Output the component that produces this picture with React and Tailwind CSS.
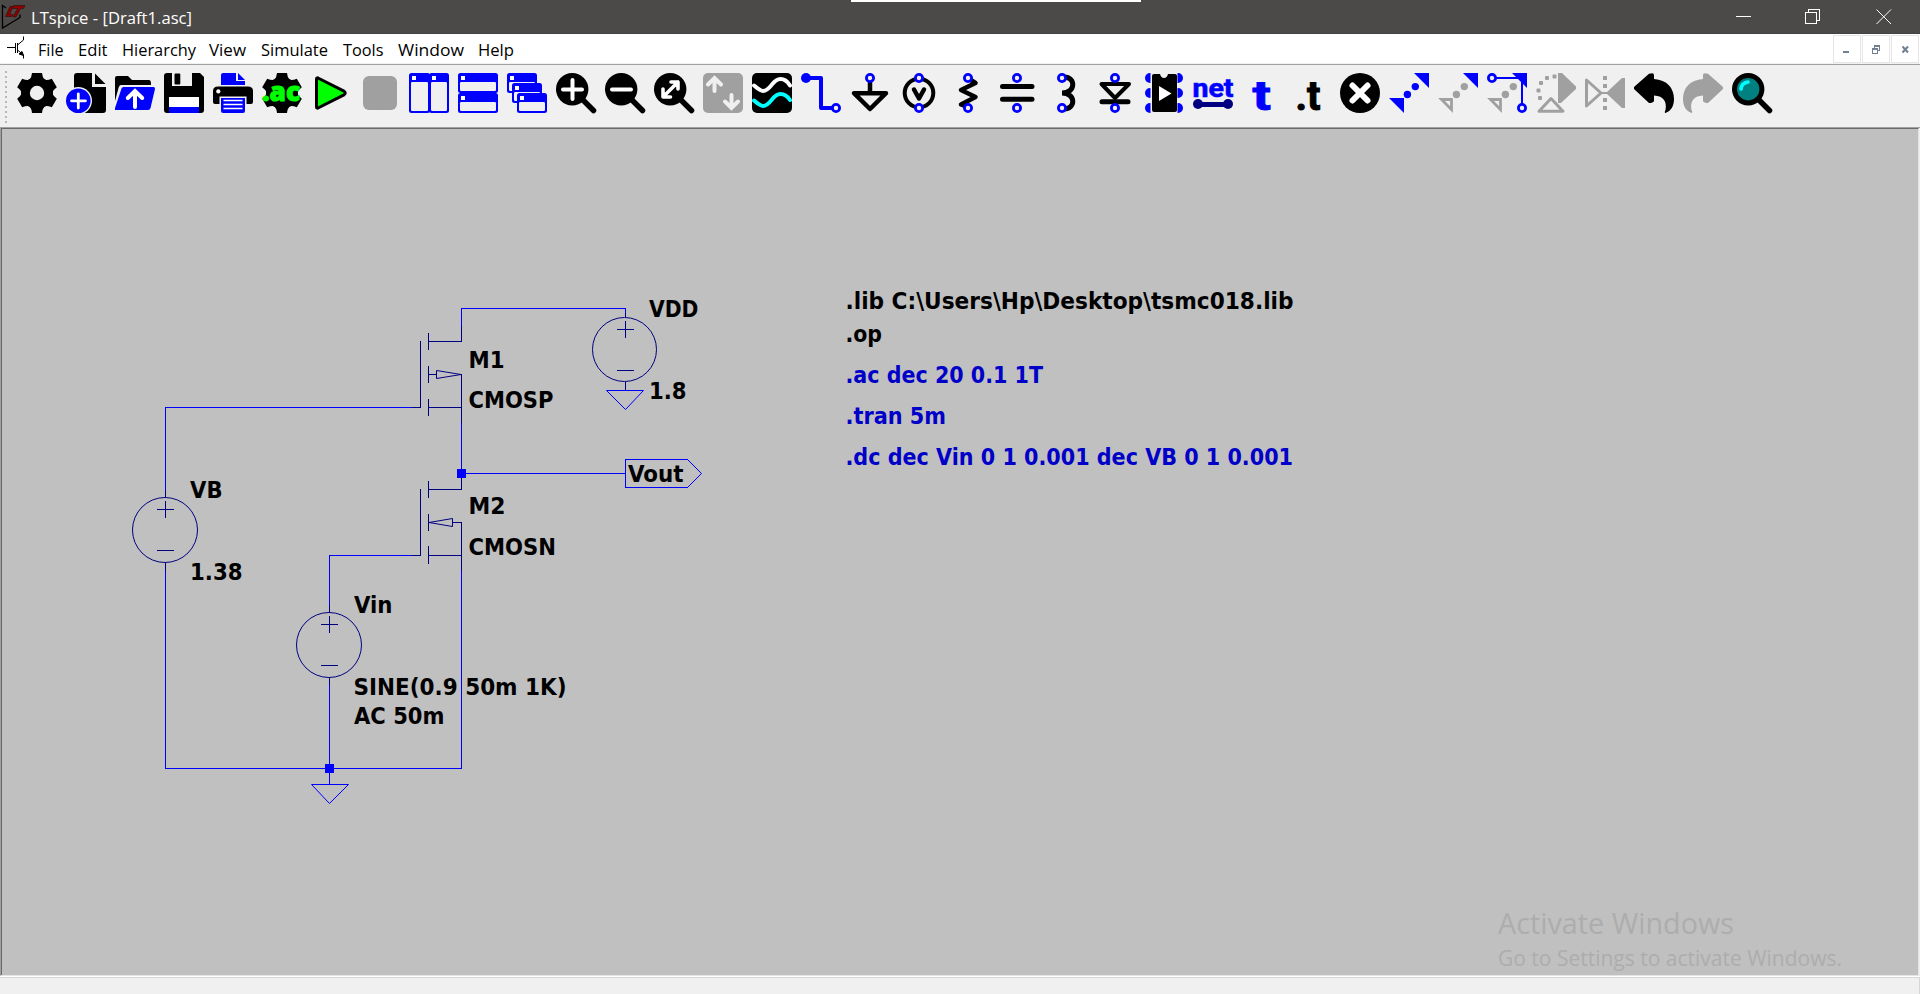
import React from "react";

const BLUE = "#0000ff";
const NAVY = "#000080";
const GRAY = "#a0a0a0";
const FACE = "#f0f0f0";

function Ring({ x, y }) {
  return <circle cx={x} cy={y} r="3.6" fill={FACE} stroke={BLUE} strokeWidth="2.8" />;
}

function Gear({ hole }) {
  return (
    <>
      <circle cx="20" cy="20" r="16" />
      {[0, 60, 120].map((a) => (
        <path key={a} d="M13 6Q14.5 4 15 0H25Q25.500 4 27 6V34Q25.500 36 25 40H15Q14.500 36 13 34Z" transform={`rotate(${a} 20 20)`} />
      ))}
      {hole && <circle cx="20" cy="20" r="7.2" fill={FACE} />}
    </>
  );
}

function Pane({ x, y, w, h }) {
  return (
    <>
      <rect x={x} y={y} width={w} height={h} rx="2.5" fill={BLUE} />
      <rect x={x + 2} y={y + 9} width={w - 4} height={h - 11} rx="1.2" fill={FACE} />
      <rect x={x + 3} y={y + 3} width="4" height="4" fill="#fff" />
    </>
  );
}

function Lens() {
  return (
    <>
      <circle cx="16.200" cy="16.200" r="16.200" />
      <path d="M25 25L37.500 37.500" stroke="#000" strokeWidth="5.500" strokeLinecap="round" />
    </>
  );
}

function Trail({ color, hollow }) {
  return (
    <>
      <circle cx="26.300" cy="13.600" r="3.700" fill={color} />
      <circle cx="18.400" cy="21.500" r="3.700" fill={color} />
      {hollow ? (
        <path d="M3.500 26.500H13.500V36.500Z" fill={FACE} stroke={color} strokeWidth="2.800" />
      ) : (
        <path d="M0 25H15V40Z" fill={color} />
      )}
      <path d="M25 0H40V15Z" fill={BLUE} />
    </>
  );
}

const TURN = "M0 14L15 .8Q20 -1 20 2V6C33 7 40 15 40 26C40 33 37 38 31.500 40Q30 40 31.500 37C33 29 30 23 20 22.500V28Q19 30 15 30L0 16Z";

const tools = [
  ["Settings", <Gear hole />],
  ["New schematic", <>
    <path d="M8 3Q8 0 11 0H26V14H40V37Q40 40 37 40H8Z" />
    <path d="M29 .5L39.500 11H29Z" />
    <circle cx="12.300" cy="27.800" r="13.700" fill={FACE} />
    <circle cx="12.300" cy="27.800" r="12.300" fill={BLUE} />
    <path d="M5.500 27.800H19.500M12.300 20.800V35" stroke="#fff" strokeWidth="2.800" strokeLinecap="round" />
  </>],
  ["Open", <>
    <path d="M0 5Q0 3 2 3H13L17 7H34Q36 7 36 11V12H6Q4 12 3 17L0 28Z" />
    <path d="M6.500 15.500Q7 14 8.500 14H38.500Q40 14 40 16L35.500 35Q35 37 33 37H0V35Z" fill={BLUE} />
    <path d="M20 34V19M12.800 25L20 18L27.200 25" fill="none" stroke="#fff" strokeWidth="4" strokeLinecap="round" />
  </>],
  ["Save", <>
    <path d="M3 0H8V13H28V0H36L40 4V37Q40 40 37 40H3Q0 40 0 37V3Q0 0 3 0Z" />
    <rect x="10.500" y="0.500" width="5.800" height="11" rx="1" />
    <rect x="5" y="24" width="30" height="10" fill="#fff" />
    <rect x="5" y="34" width="30" height="6" fill={BLUE} />
  </>],
  ["Print", <>
    <path d="M8 2Q8 0 10 0H23V8H32V12H8Z" fill={BLUE} />
    <path d="M25 0L32 7H25Z" fill={BLUE} />
    <path d="M5 13.500H35Q40 13.500 40 18V29Q40 31 38 31H2Q0 31 0 29V18Q0 13.500 5 13.500Z" />
    <circle cx="5.300" cy="18.400" r="2.100" fill="#fff" />
    <path d="M6.500 23.500H33.500V40H6.500Z" fill={FACE} />
    <path d="M8 25H32V38Q32 40 30 40H10Q8 40 8 38Z" fill={BLUE} />
    <path d="M10.500 27.500H29.500M10.500 31.500H29.500M10.500 35.500H29.500" stroke="#fff" strokeWidth="1.300" />
  </>],
  ["Run analysis", <>
    <Gear />
    <text x="0" y="27.500" textLength="38" lengthAdjust="spacingAndGlyphs" fontSize="26" fontWeight="900" fill="#00ff00" stroke="#00ff00" strokeWidth="1" className="font-['Open_Sans',sans-serif]">.ac</text>
  </>],
  ["Run", <path d="M5.500 6Q5.500 4 8 5.500L33 18.200Q35.500 20 33 21.800L8 34.500Q5.500 36 5.500 34Z" fill="#00ff00" stroke="#000" strokeWidth="3" strokeLinejoin="round" />],
  ["Stop", <rect x="3" y="3" width="34" height="34" rx="6" fill={GRAY} />],
  ["Tile vertically", <><Pane x={0} y={0} w={21} h={40} /><Pane x={20} y={0} w={20} h={40} /></>],
  ["Tile horizontally", <><Pane x={0} y={0} w={40} h={20} /><Pane x={0} y={20} w={40} h={20} /></>],
  ["Cascade", <><Pane x={0} y={0} w={30} h={20} /><Pane x={5} y={10} w={30} h={20} /><Pane x={10} y={20} w={30} h={20} /></>],
  ["Zoom in", <><Lens /><path d="M7 16.500H26M16.500 7V26" stroke="#fff" strokeWidth="4" strokeLinecap="round" /></>],
  ["Zoom out", <><Lens /><path d="M7 16.500H26" stroke="#fff" strokeWidth="4" strokeLinecap="round" /></>],
  ["Zoom to fit", <><Lens /><path d="M9.500 23.500L24 9M17 9H24V16M9 16V24H16.500" fill="none" stroke="#fff" strokeWidth="3.600" strokeLinecap="round" strokeLinejoin="round" /></>],
  ["Autorange", <>
    <rect width="40" height="40" rx="5" fill={GRAY} />
    <path d="M11.500 18V6M5 11.500L11.500 5L18 11.500M28.500 22V34M22 28.500L28.500 35L35 28.500" fill="none" stroke={FACE} strokeWidth="4" strokeLinecap="round" />
  </>],
  ["Waveform", <>
    <rect width="40" height="40" rx="5" />
    <path d="M2 12.500C6 16 8 18 11 18C19 18 20 6 28.500 6C32 6 35 7.500 38 12.500" fill="none" stroke="#fff" strokeWidth="4" strokeLinecap="round" />
    <path d="M2 27.500C6 31 8 33 11 33C19 33 20 21 28.500 21C32 21 35 22.500 38 27" fill="none" stroke="#00ffff" strokeWidth="4" strokeLinecap="round" />
  </>],
  ["Wire", <>
    <path d="M5 5H20V35H32" fill="none" stroke={BLUE} strokeWidth="4" strokeLinejoin="round" />
    <circle cx="5" cy="5" r="5" fill={BLUE} /><Ring x={35} y={35} />
  </>],
  ["Ground", <>
    <path d="M20 8V19M4 20.200H36L20 36Z" fill={FACE} stroke="#000" strokeWidth="4.500" strokeLinejoin="round" />
    <Ring x={20} y={5} />
  </>],
  ["Voltage source", <>
    <circle cx="20" cy="20" r="14.300" fill={FACE} stroke="#000" strokeWidth="4" />
    <path d="M15 16.500L20 25.500L25 16.500" fill="none" stroke="#000" strokeWidth="4.500" strokeLinecap="round" strokeLinejoin="round" />
    <Ring x={20} y={5} /><Ring x={20} y={35} />
  </>],
  ["Resistor", <>
    <path d="M22 6.500L27.500 10L13 17L27.500 24L13 31.500L18 33.500" fill="none" stroke="#000" strokeWidth="4.500" strokeLinecap="round" strokeLinejoin="round" />
    <Ring x={20} y={5} /><Ring x={20} y={35} />
  </>],
  ["Capacitor", <>
    <path d="M5.500 13.500H35M5.500 26.300H35" stroke="#000" strokeWidth="5" strokeLinecap="round" />
    <Ring x={20} y={5} /><Ring x={20} y={35} />
  </>],
  ["Inductor", <>
    <path d="M18 4C30 4 30 20 16 20C30 20 30 36 18 36" fill="none" stroke="#000" strokeWidth="5" strokeLinecap="round" />
    <Ring x={16} y={5} /><Ring x={16} y={35} />
  </>],
  ["Diode", <>
    <path d="M6.500 11H34L20 25Z" fill={FACE} stroke="#000" strokeWidth="4" strokeLinejoin="round" />
    <path d="M7 28.800H33" stroke="#000" strokeWidth="5" strokeLinecap="round" />
    <Ring x={20} y={5} /><Ring x={20} y={35} />
  </>],
  ["Component", <>
    {[5, 20, 35].map((y) => <g key={y} fill={BLUE}><circle cx="6" cy={y} r="5" /><circle cx="34" cy={y} r="5" /></g>)}
    <rect x="6.500" y="0" width="27" height="40" fill={FACE} />
    <path d="M10 1H16Q17 5 20 5Q23 5 24 1H31Q33 1 33 3V37Q33 39 31 39H10Q8 39 8 37V3Q8 1 10 1Z" />
    <path d="M15 13L27.500 20.500L15 28Z" fill="#fff" />
  </>],
  ["Net label", <>
    <text x="-0.500" y="23.500" textLength="41" lengthAdjust="spacingAndGlyphs" fontSize="25" fontWeight="700" fill={BLUE} stroke={BLUE} strokeWidth="0.600" className="font-[Roboto,sans-serif]">net</text>
    <path d="M5 31.500H35" stroke={NAVY} strokeWidth="5" /><circle cx="5" cy="31" r="5" fill={NAVY} /><circle cx="35" cy="31" r="5" fill={NAVY} />
  </>],
  ["Text", <text x="10.500" y="36.500" textLength="18.500" lengthAdjust="spacingAndGlyphs" fontSize="41" fontWeight="700" fill={BLUE} stroke={BLUE} strokeWidth="0.800" className="font-[Roboto,sans-serif]">t</text>],
  ["Directive", <text x="4.500" y="36.500" textLength="25" lengthAdjust="spacingAndGlyphs" fontSize="41" fontWeight="700" stroke="#000" strokeWidth="1" className="font-[Roboto,sans-serif]">.t</text>],
  ["Delete", <><circle cx="20" cy="20" r="20" /><path d="M12.500 12.500L27.500 27.500M27.500 12.500L12.500 27.500" stroke="#fff" strokeWidth="6" strokeLinecap="round" /></>],
  ["Duplicate", <Trail color={BLUE} />],
  ["Move", <Trail color={GRAY} hollow />],
  ["Drag", <><Trail color={GRAY} hollow /><path d="M7 5H35V33" fill="none" stroke={BLUE} strokeWidth="2" /><Ring x={5} y={5} /><Ring x={35} y={35} /></>],
  ["Rotate", <g fill={GRAY}>
    <path d="M22 0H26L40 13.500V16L25 30H22Z" />
    {[[18.500, 3.500], [11, 5], [5, 10], [2.500, 17.500], [4, 25]].map(([x, y]) => <rect key={x} x={x - 2} y={y - 2} width="4" height="4" rx="1" />)}
    <path d="M3 38.200L15 25.500L27 38.200Z" fill={FACE} stroke={GRAY} strokeWidth="3" strokeLinejoin="round" />
  </g>],
  ["Mirror", <g fill={GRAY}>
    <path d="M1.500 7V33L16 20Z" fill={FACE} stroke={GRAY} strokeWidth="3" strokeLinejoin="round" />
    <path d="M40 5V35H37L22 21V19L37 5ZM15 19H25V21H15Z" />
    {[3, 11, 25, 33].map((y) => <rect key={y} x="18" y={y} width="4" height="4" />)}
  </g>],
  ["Undo", <path d={TURN} />],
  ["Redo", <path d={TURN} fill={GRAY} transform="translate(40 0) scale(-1 1)" />],
  ["Find", <>
    <path d="M27 27L37.500 37.500" stroke="#000" strokeWidth="5.500" strokeLinecap="round" />
    <circle cx="16.200" cy="16.200" r="13.700" fill="#008080" stroke="#000" strokeWidth="5" />
    <path d="M9 16Q9.500 10 16 9" fill="none" stroke="#00ffff" strokeWidth="3.600" strokeLinecap="round" />
  </>],
];

const menus = [
  ["File", "w-[40px]", 25.5], ["Edit", "w-[44px]", 29.5], ["Hierarchy", "w-[87.5px]", 74],
  ["View", "w-[51.500px]", 37], ["Simulate", "w-[82px]", 67], ["Tools", "w-[55px]", 40.5],
  ["Window", "w-[80px]", 66], ["Help", "w-[40px]", 36],
];

// Label text with a fixed advance width
function Fit({ w, size, y = 18, h = 24, children }) {
  return (
    <svg width={w + 2} height={h} className="block overflow-visible font-['Open_Sans',sans-serif]" fill="currentColor">
      <text x="0" y={y} fontSize={size} textLength={w} lengthAdjust="spacingAndGlyphs">{children}</text>
    </svg>
  );
}

const labels = [
  ["VDD", 649, 317, 49.5], ["M1", 468.5, 367.5, 36], ["CMOSP", 468.5, 408, 85], ["1.8", 649, 399, 37.5],
  ["Vout", 628, 482, 55.5], ["M2", 468.5, 514, 37], ["CMOSN", 468.5, 555, 87.5], ["VB", 190, 498, 32.5],
  ["1.38", 190, 580, 52.5], ["Vin", 354, 613, 38.5], ["SINE(0.9 50m 1K)", 353.5, 695, 213], ["AC 50m", 354, 724, 90.5],
  [".lib C:\\Users\\Hp\\Desktop\\tsmc018.lib", 845.5, 309, 448], [".op", 845.5, 341.5, 36.5],
];
const directives = [[".ac dec 20 0.1 1T", 845.5, 383, 197.5], [".tran 5m", 845.5, 424, 100.5], [".dc dec Vin 0 1 0.001 dec VB 0 1 0.001", 845.5, 465, 447.5]];

function Source({ x, y, r = 32.5 }) {
  return (
    <>
      <circle cx={x - 0.5} cy={y} r={r} />
      <path d={`M${x - 8.5} ${y - 20.5}h17M${x} ${y - 29}v17M${x - 8.5} ${y + 20.5}h17`} shapeRendering="crispEdges" />
    </>
  );
}

function Schematic() {
  return (
    <svg viewBox="2 129 1916 846" className="block h-[846px] w-[1916px]">
      <g fill="none" stroke={BLUE} strokeWidth="1">
        <g shapeRendering="crispEdges">
          <path d="M461.500 327V308.500H625.500V313M412 407.500H165.500V490M461.500 423V473.500H625M412 555.500H329.500V605M165.500 571V768.500H461.500V571M329.500 685V784" />
          <path d="M625.500 459.500H687.500M625.500 459V488M625.500 487.500H687.500" />
        </g>
        <path d="M687.500 459.500L701.500 473.500L687.500 487.500" />
        <path d="M606.500 390.500H643.500L625.500 409.500ZM311.500 784.500H348.500L329.500 803.500Z" />
        <g fill={BLUE} stroke="none"><rect x="457" y="469" width="9" height="9" /><rect x="325" y="764" width="9" height="9" /></g>
      </g>
      <g fill="none" stroke={NAVY} strokeWidth="1">
        <g shapeRendering="crispEdges">
          <path d="M461.500 326V341.500H428M428.500 333V350M428.500 366V383M428.500 399V416M420.500 341V407.500H412M428 407.500H461M461.500 374V423M428 374.500H436" />
          <path d="M461.500 478V489.500H428M428.500 481V498M428.500 514V531M428.500 546V564M420.500 489V555.500H412M428 555.500H461M452 522.500H461.500V571" />
          <path d="M165.500 490V497M165.500 563V571M329.500 605V612M329.500 678V685M625.500 313V317M625.500 382V390" />
        </g>
        <path d="M436.500 370.500V378.500L461 374.500ZM452.500 518.500V526.500L429 522.500Z" />
        <Source x={165.500} y={530} /><Source x={329.500} y={645} /><Source x={625} y={349.500} r={32} />
      </g>
      <g className="font-['DejaVu_Sans_Condensed','DejaVu_Sans',sans-serif] font-bold" fontSize="22.500">
        {labels.map(([t, x, y, w]) => <text key={t} x={x} y={y} textLength={w} lengthAdjust="spacingAndGlyphs">{t}</text>)}
        <g fill="#0000c8">
          {directives.map(([t, x, y, w]) => <text key={t} x={x} y={y} textLength={w} lengthAdjust="spacingAndGlyphs">{t}</text>)}
        </g>
      </g>
      <g fill="#adadad" className="font-['Open_Sans',sans-serif]">
        <text x="1498" y="934" fontSize="29" textLength="236" lengthAdjust="spacingAndGlyphs">Activate Windows</text>
        <text x="1498" y="966" fontSize="22" textLength="344" lengthAdjust="spacingAndGlyphs">Go to Settings to activate Windows.</text>
      </g>
    </svg>
  );
}

export default function App() {
  return (
    <div className="flex h-[994px] w-[1920px] flex-col overflow-hidden bg-[#f0f0f0]">
      <header className="relative flex h-[34px] shrink-0 items-start border-b border-[#444240] bg-[#4c4a48] text-white">
        <svg width="26" height="30" className="ml-[1px] mt-[3px] shrink-0" fill="none">
          <path d="M5 5L1.500 2.500V25L19 14.500V11.500" stroke="#000" strokeWidth="1.300" />
          <path d="M9 3.500H12L8.500 11.500H12L11 13.500H4.500ZM12.500 2.500H24L22.500 5.500H19.500L15 14H12L16.500 5.500H11.500Z" fill="#900000" stroke="#1a0808" strokeWidth="0.500" />
        </svg>
        <div className="ml-[4px]"><Fit w={161} size={16.5} y={24} h={32}>LTspice - [Draft1.asc]</Fit></div>
        <div className="absolute left-[851px] top-0 h-[2px] w-[290px] bg-white" />
        <svg width="184" height="33" className="ml-auto shrink-0" fill="none" stroke="#fff" shapeRendering="crispEdges">
          <path d="M0 16.500H15M69.500 12.500H80.500V23.500H69.500ZM72.500 12V9.500H83.500V20.500H80" />
          <path d="M140.500 9.500L155 24M155 9.500L140.500 24" shapeRendering="auto" />
        </svg>
      </header>

      <nav className="flex h-[29px] shrink-0 items-start bg-white text-black">
        <svg width="20" height="26" className="ml-[6px] mt-[2px] shrink-0" fill="none" stroke="#000">
          <path d="M1 11.500H9M9.500 7V17M11.500 7V17" shapeRendering="crispEdges" />
          <path d="M11.500 9L17.500 4V0.500M11.500 14L17.500 19V22.500" />
          <path d="M13 18L16 15.500L17.500 19.500Z" fill="#000" />
        </svg>
        <div className="ml-[11.500px] flex">
          {menus.map(([t, box, w]) => <div key={t} className={box}><Fit w={w} size={16.3} y={22} h={28}>{t}</Fit></div>)}
        </div>
        <div className="ml-auto mr-[1px] flex gap-px pt-px">
          <svg width="28" height="28" className="border border-[#e5e5e5]" shapeRendering="crispEdges"><path d="M9 15H15V17H9Z" fill="#708090" /></svg>
          <svg width="28" height="28" className="border border-[#e5e5e5]" shapeRendering="crispEdges" fill="none" stroke="#708090"><path d="M9.500 14V17.500H14.500V14M9 13.500H15M9 12.500H15M11.500 12V9.500M11 9.500H17M17 10.500H11M16.500 10V15M14 14.500H17" /></svg>
          <svg width="28" height="28" className="border border-[#e5e5e5]" stroke="#708090" strokeWidth="2"><path d="M10.500 10.500L16 16.500M16 10.500L10.500 16.500" /></svg>
        </div>
      </nav>

      <div className="flex h-[64px] shrink-0 items-start border-y border-t-[#a0a0a0] bg-[#f0f0f0] mt-px border-b-[#a0a0a0] pl-1">
        <svg width="4" height="56" className="mt-[6px] shrink-0">
          {[0, 1, 2, 3, 4, 5, 6, 7, 8, 9, 10].map((i) => <rect key={i} x="1" y={i * 5} width="2" height="2" fill="#b8b8b8" />)}
        </svg>
        <div className="ml-[9px] mt-[8px] flex gap-[9px]">
          {tools.map(([name, art]) => (
            <button key={name} aria-label={name} className="block h-10 w-10 shrink-0">
              <svg viewBox="0 0 40 40" className="block h-10 w-10 overflow-visible">{art}</svg>
            </button>
          ))}
        </div>
      </div>

      <main className="flex h-[848px] w-[1919px] shrink-0 border-b border-l border-[#e3e3e3] border-l-[#a0a0a0]">
        <div className="h-[847px] w-[1918px] border-l border-r border-t border-l-[#696969] border-r-[#e3e3e3] border-t-[#696969] bg-[#c0c0c0]">
          <Schematic />
        </div>
      </main>
      <footer className="h-[18px] shrink-0 border-t border-white bg-[#f0f0f0]">
        <div className="h-[17px] border-r border-t border-[#d7d7d7]" />
      </footer>
    </div>
  );
}
